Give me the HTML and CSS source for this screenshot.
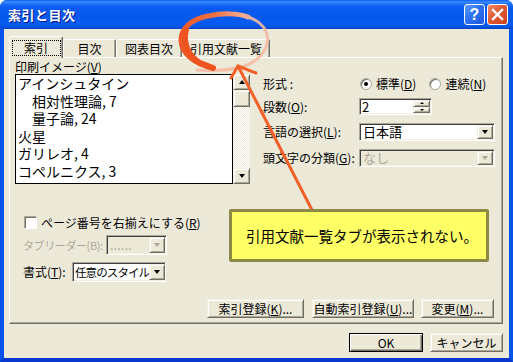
FILE: index.html
```html
<!DOCTYPE html>
<html lang="ja">
<head>
<meta charset="utf-8">
<title>索引と目次</title>
<link rel="stylesheet" href="styles.css">
</head>
<body>
<div class="window">
  <div class="titlebar">
    <span class="title">索引と目次</span>
    <div class="tb-buttons">
      <span class="tb-btn help">?</span>
      <span class="tb-btn close">
        <svg width="19" height="19" viewBox="0 0 19 19"><path d="M5 5 L14 14 M14 5 L5 14" stroke="#fff" stroke-width="2.4" stroke-linecap="square"/></svg>
      </span>
    </div>
  </div>
  <div class="client">
    <div class="tabs">
      <div class="tab active w1"><span class="focus">索引</span></div>
      <div class="tab w2">目次</div>
      <div class="tab w3">図表目次</div>
      <div class="tab w4">引用文献一覧</div>
    </div>
    <div class="panel">
      <div class="top">
        <div class="left">
          <div class="lbl-preview">印刷イメージ(<u>V</u>)</div>
          <div class="preview">
            <div class="list">
              <div>アインシュタイン</div>
              <div class="ind">相対性理論, 7</div>
              <div class="ind">量子論, 24</div>
              <div>火星</div>
              <div>ガリレオ, 4</div>
              <div>コペルニクス, 3</div>
            </div>
            <div class="vscroll">
              <div class="sbtn"><span class="tri-up"></span></div>
              <div class="sthumb"></div>
              <div class="strack"></div>
              <div class="sbtn"><span class="tri-down"></span></div>
            </div>
          </div>
        </div>
        <div class="right">
          <div class="row r1">
            <span class="rlabel">形式 :</span>
            <span class="radio checked"></span><span class="rtext">標準(<u>D</u>)</span>
            <span class="radio r-second"></span><span class="rtext">連続(<u>N</u>)</span>
          </div>
          <div class="row r2">
            <span class="rlabel">段数(<u>O</u>):</span>
            <div class="spin sunken">
              <span class="spin-val">2</span>
              <div class="spin-btns">
                <div class="spb"><span class="tri-up sm"></span></div>
                <div class="spb"><span class="tri-down sm"></span></div>
              </div>
            </div>
          </div>
          <div class="row r3">
            <span class="rlabel">言語の選択(<u>L</u>):</span>
            <div class="combo sunken wide">
              <span class="cval">日本語</span>
              <span class="cbtn"><span class="tri-down"></span></span>
            </div>
          </div>
          <div class="row r4">
            <span class="rlabel">頭文字の分類(<u>G</u>):</span>
            <div class="combo sunken wide disabled">
              <span class="cval">なし</span>
              <span class="cbtn"><span class="tri-down"></span></span>
            </div>
          </div>
        </div>
      </div>
      <div class="opts">
        <div class="chk-row">
          <span class="checkbox"></span>
          <span class="chk-label">ページ番号を右揃えにする(<u>R</u>)</span>
        </div>
        <div class="tl-row">
          <span class="tl-label dis">タブリーダー(B):</span>
          <div class="combo sunken tl disabled">
            <span class="cval">......</span>
            <span class="cbtn"><span class="tri-down"></span></span>
          </div>
        </div>
        <div class="fmt-row">
          <span class="fmt-label">書式(<u>T</u>):</span>
          <div class="combo sunken fmt">
            <span class="cval">任意のスタイル</span>
            <span class="cbtn"><span class="tri-down"></span></span>
          </div>
        </div>
      </div>
      <div class="btnrow">
        <span class="btn b1">索引登録(<u>K</u>)...</span>
        <span class="btn b2">自動索引登録(<u>U</u>)...</span>
        <span class="btn b3">変更(<u>M</u>)...</span>
      </div>
    </div>
    <div class="dlgbtns">
      <span class="btn default">OK</span>
      <span class="btn cancel">キャンセル</span>
    </div>
  </div>

  <svg class="annot" width="513" height="362" viewBox="0 0 513 362">
    <defs>
      <linearGradient id="ring" gradientUnits="userSpaceOnUse" x1="180" y1="50" x2="268" y2="30">
        <stop offset="0" stop-color="#EF5522"/>
        <stop offset="0.45" stop-color="#F0703F"/>
        <stop offset="0.75" stop-color="#F4A88E"/>
        <stop offset="1" stop-color="#F7C4B2"/>
      </linearGradient>
    </defs>
    <path d="M197 70 C 212 71, 228 70, 238 68 C 252 65, 264 56, 267 44 C 270 31, 261 21, 248 17" fill="none" stroke="#F5B9A3" stroke-width="3" stroke-linecap="round" opacity="0.9"/>
    <path d="M248 17 C 238 13, 222 13, 208 16 C 192 19, 181 28, 181 40 C 181 53, 194 64, 213 68" fill="none" stroke="url(#ring)" stroke-width="5" stroke-linecap="round"/>
    <path d="M186 30 C 183 40, 186 55, 200 63 L 213 68" fill="none" stroke="#EE5320" stroke-width="6" stroke-linecap="round"/>
    <path d="M312 210 L 238 66" fill="none" stroke="#F2612A" stroke-width="3" stroke-linecap="round"/>
    <path d="M256 73 L 238 66 L 231 78" fill="none" stroke="#F2612A" stroke-width="3" stroke-linecap="round" stroke-linejoin="round"/>
  </svg>
  <div class="callout">引用文献一覧タブが表示されない。</div>
</div>
</body>
</html>
```

FILE: styles.css
```css
* { box-sizing: border-box; }
html, body { margin: 0; padding: 0; }
body {
  width: 513px;
  height: 362px;
  overflow: hidden;
  background: #fff;
  font-family: "Noto Sans CJK JP", "Noto Sans", sans-serif;
  font-size: 12px;
  color: #000;
}
u { text-decoration: underline; text-underline-offset: 1px; }

.window {
  position: relative;
  width: 513px;
  height: 362px;
  display: flex;
  flex-direction: column;
  border-radius: 7px 7px 0 0;
  overflow: hidden;
  background: #0553E8;
}

.titlebar {
  height: 29px;
  flex: none;
  display: flex;
  align-items: center;
  padding: 0 5px 0 8px;
  background: linear-gradient(to bottom, #0A5DF0 0%, #3F8CFF 7%, #1C6DF8 14%, #0A5CF0 25%, #0657EC 60%, #085CF2 80%, #0552E2 93%, #0444C4 100%);
}
.title {
  flex: 1;
  color: #fff;
  font-weight: bold;
  font-size: 13px;
  line-height: 16px;
  text-shadow: 1px 1px #0A1883;
  letter-spacing: 0.5px;
}
.tb-buttons { display: flex; gap: 2px; }
.tb-btn {
  width: 21px;
  height: 21px;
  border: 1px solid #fff;
  border-radius: 3px;
  display: flex;
  align-items: center;
  justify-content: center;
}
.help {
  background: linear-gradient(135deg, #5C9BFF 0%, #2F72F2 45%, #1C58DE 100%);
  color: #fff;
  font-family: "Liberation Sans", sans-serif;
  font-weight: bold;
  font-size: 16px;
  line-height: 16px;
}
.close {
  background: linear-gradient(135deg, #F08C6A 0%, #E05A32 45%, #C9411E 100%);
}

.client {
  flex: 1;
  background: #ECE9D8;
  border: 4px solid #0553E8;
  border-top: 0;
  border-bottom-color: #0838CF;
  padding: 7px 6px 0 5px;
  display: flex;
  flex-direction: column;
}

/* tabs */
.tabs {
  display: flex;
  align-items: flex-end;
  height: 21px;
  position: relative;
  z-index: 2;
}
.tab {
  height: 18px;
  background: #ECE9D8;
  border: 1px solid;
  border-bottom: 0;
  border-color: #fff #716F64 transparent #fff;
  box-shadow: inset -1px 0 #ACA899;
  border-radius: 2px 2px 0 0;
  display: flex;
  align-items: center;
  justify-content: center;
  line-height: 14px;
  padding-top: 1px;
}
.tab.active {
  height: 22px;
  margin-bottom: -1px;
  padding-top: 0;
}
.w1 { width: 54px; }
.w2 { width: 53px; }
.w3 { width: 66px; }
.w4 { width: 88px; }
.focus {
  width: 47px;
  height: 14px;
  outline: 1px dotted #000;
  display: flex;
  align-items: center;
  justify-content: center;
  margin-top: 1px;
}

/* panel */
.panel {
  width: 494px;
  height: 267px;
  flex: none;
  border: 1px solid;
  border-color: #fff #716F64 #716F64 #fff;
  box-shadow: inset -1px -1px #ACA899;
  display: flex;
  flex-direction: column;
}
.top { display: flex; height: 126px; padding-left: 5px; }
.left { width: 235px; }
.lbl-preview { margin-top: 2px; height: 14px; line-height: 14px; }
.preview { display: flex; height: 110px; }
.list {
  width: 218px;
  border: 1px solid #000;
  background: #fff;
  padding-left: 2px;
  font-size: 14px;
  line-height: 17.5px;
  overflow: hidden;
  white-space: nowrap;
}
.list .ind { padding-left: 14px; }
.vscroll { width: 17px; display: flex; flex-direction: column; }
.sbtn, .sthumb, .spb, .cbtn, .btn {
  background: #ECE9D8;
  border: 1px solid;
  border-color: #F1EFE2 #716F64 #716F64 #F1EFE2;
  box-shadow: inset 1px 1px #fff, inset -1px -1px #ACA899;
}
.sbtn { height: 16px; display: flex; align-items: center; justify-content: center; }
.sthumb { height: 17px; }
.strack {
  flex: 1;
  background: repeating-conic-gradient(#fff 0 25%, #ECE9D8 0 50%) 0 0 / 2px 2px;
}
.tri-up, .tri-down {
  width: 0; height: 0;
  border-left: 3.5px solid transparent;
  border-right: 3.5px solid transparent;
}
.tri-up { border-bottom: 4px solid #000; }
.tri-down { border-top: 4px solid #000; }
.tri-up.sm { border-left-width: 2.5px; border-right-width: 2.5px; border-bottom-width: 2px; }
.tri-down.sm { border-left-width: 2.5px; border-right-width: 2.5px; border-top-width: 2px; }

.right { margin-left: 13px; padding-top: 18px; width: 236px; }
.row { display: flex; align-items: center; line-height: 14px; }
.rlabel { width: 96px; flex: none; white-space: nowrap; }
.r1 { height: 16px; }
.r2 { margin-top: 6px; height: 17px; }
.r3 { margin-top: 8px; height: 18px; }
.r4 { margin-top: 8px; height: 18px; }
.radio {
  width: 12px; height: 12px;
  border-radius: 50%;
  background: #fff;
  border: 1px solid #ACA899;
  box-shadow: inset 1px 1px #716F64;
  margin-left: 1px;
  display: flex;
  align-items: center;
  justify-content: center;
  flex: none;
}
.radio.checked::after {
  content: "";
  width: 4px; height: 4px;
  border-radius: 50%;
  background: #000;
}
.radio.r-second { margin-left: 13px; }
.rtext { margin-left: 4px; }

.sunken {
  background: #fff;
  border: 1px solid;
  border-color: #ACA899 #fff #fff #ACA899;
  box-shadow: inset 1px 1px #404040, inset -1px -1px #F1EFE2;
}
.spin {
  width: 73px; height: 17px;
  display: flex;
  padding: 1px 1px 1px 2px;
}
.spin-val { flex: 1; font-size: 13px; line-height: 14px; }
.spin-btns { width: 17px; display: flex; flex-direction: column; }
.spb { flex: 1; display: flex; align-items: center; justify-content: center; }

.combo {
  height: 18px;
  display: flex;
  align-items: stretch;
  padding: 1px 1px 1px 3px;
}
.combo.wide { width: 136px; }
.cval {
  flex: 1;
  font-size: 13px;
  line-height: 14px;
  white-space: nowrap;
  display: flex;
  align-items: center;
}
.cbtn { width: 16px; display: flex; align-items: center; justify-content: center; flex: none; }
.combo.disabled { background: #ECE9D8; }
.combo.disabled .cval { color: #ACA899; }
.combo.disabled .tri-down { border-top-color: #ACA899; }

.opts { padding-left: 13px; }
.chk-row { margin-top: 32px; height: 13px; display: flex; align-items: center; padding-left: 1px; line-height: 14px; }
.checkbox {
  width: 13px; height: 13px;
  background: #fff;
  border: 1px solid;
  border-color: #ACA899 #fff #fff #ACA899;
  box-shadow: inset 1px 1px #716F64;
  flex: none;
}
.chk-label { margin-left: 4px; }
.tl-row, .fmt-row { display: flex; align-items: center; height: 20px; line-height: 14px; }
.tl-row { margin-top: 6px; }
.fmt-row { margin-top: 7px; }
.tl-label { width: 83px; flex: none; white-space: nowrap; font-size: 11px; letter-spacing: -0.4px; }
.dis { color: #ACA899; }
.fmt-label { width: 49px; flex: none; white-space: nowrap; }
.combo.tl { width: 61px; height: 20px; }
.combo.fmt { width: 94px; height: 20px; padding-left: 2px; }
.combo.fmt .cval { font-size: 11.5px; letter-spacing: -0.9px; }

.btnrow {
  margin-top: 17px;
  display: flex;
  justify-content: flex-end;
  padding-right: 8px;
}
.btn {
  height: 19px;
  display: flex;
  align-items: center;
  justify-content: center;
  line-height: 14px;
  white-space: nowrap;
}
.b1 { width: 97px; }
.b2 { width: 102px; margin-left: 8px; }
.b3 { width: 73px; margin-left: 7px; }

.dlgbtns {
  margin-top: 9px;
  display: flex;
  justify-content: flex-end;
}
.btn.default {
  width: 74px;
  border-color: #000;
  box-shadow: inset 1px 1px #fff, inset -1px -1px #716F64, inset -2px -2px #ACA899;
}
.btn.cancel { width: 73px; margin-left: 7px; }

/* annotations */
.annot {
  position: absolute;
  left: 0;
  top: 0;
  pointer-events: none;
  z-index: 5;
}
.callout {
  position: absolute;
  left: 229px;
  top: 209px;
  width: 260px;
  height: 53px;
  border: 3px solid #8E8A46;
  border-radius: 2px;
  background: #FFFF66;
  padding-left: 14px;
  display: flex;
  align-items: center;
  font-size: 14.5px;
  line-height: 18px;
  z-index: 6;
}
```
